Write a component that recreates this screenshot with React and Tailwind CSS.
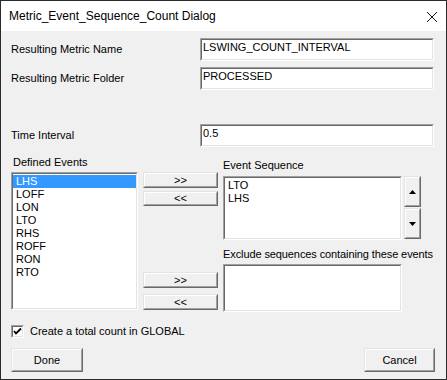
import React from "react";

const FONT = { fontFamily: '"Liberation Sans", Arial, sans-serif' };

function Sunken({ className = "", children }) {
  return (
    <div className={`border border-t-[#a0a0a0] border-l-[#a0a0a0] border-b-white border-r-white ${className}`}>
      <div className="h-full w-full border border-t-[#696969] border-l-[#696969] border-b-[#e3e3e3] border-r-[#e3e3e3] bg-white overflow-hidden">
        {children}
      </div>
    </div>
  );
}

function Raised({ className = "", children }) {
  return (
    <div className={`border border-t-[#e3e3e3] border-l-[#e3e3e3] border-b-[#696969] border-r-[#696969] ${className}`}>
      <div className="h-full w-full border border-t-white border-l-white border-b-[#a0a0a0] border-r-[#a0a0a0] bg-[#f0f0f0] flex items-center justify-center text-[11px] text-black leading-none">
        {children}
      </div>
    </div>
  );
}

function TextField({ value }) {
  return (
    <Sunken className="w-[234px] h-[23px]">
      <div className="pl-[1px] pt-[1px] text-[11px] leading-[13px] text-black">{value}</div>
    </Sunken>
  );
}

function Row({ label, value, className = "" }) {
  return (
    <div className={`flex items-center ${className}`}>
      <span className="w-[189px] text-[11px] leading-[13px] text-black">{label}</span>
      <TextField value={value} />
    </div>
  );
}

const events = ["LHS", "LOFF", "LON", "LTO", "RHS", "ROFF", "RON", "RTO"];

export default function App() {
  return (
    <div className="w-[447px] h-[380px] border border-[#2a2a2a] bg-[#f0f0f0] flex flex-col" style={FONT}>
      {/* title bar */}
      <div className="h-[30px] bg-white flex items-center justify-between pl-[8px] pr-[8px] shrink-0">
        <span className="text-[12px] text-black">
          Metric_Event_Sequence_Count Dialog
        </span>
        <svg width="12" height="12" viewBox="0 0 12 12" className="mt-[1px]">
          <path d="M1 1 L11 11 M11 1 L1 11" stroke="#111" strokeWidth="1" fill="none" />
        </svg>
      </div>

      <div className="pl-[10px] pr-[10px] flex flex-col">
        <Row label="Resulting Metric Name" value="LSWING_COUNT_INTERVAL" className="mt-[7px]" />
        <Row label="Resulting Metric Folder" value="PROCESSED" className="mt-[6px]" />
        <Row label="Time Interval" value="0.5" className="mt-[34px]" />

        {/* lists */}
        <div className="flex">
          <div className="flex flex-col w-[127px]">
            <span className="mt-[9px] text-[11px] leading-[13px] text-black pl-[2px]">Defined Events</span>
            <Sunken className="mt-[3px] h-[138px]">
              <div className="pt-[1px] text-[11px] leading-[13px] text-black">
                {events.map((e, i) => (
                  <div key={e} className={`pl-[3px] h-[13px] ${i === 0 ? "bg-[#3399ff] text-white" : ""}`}>{e}</div>
                ))}
              </div>
            </Sunken>
          </div>

          <div className="flex flex-col w-[75px] ml-[5px]">
            <Raised className="mt-[25px] h-[16px]">&gt;&gt;</Raised>
            <Raised className="mt-[3px] h-[15px]">&lt;&lt;</Raised>
            <Raised className="mt-[66px] h-[16px]">&gt;&gt;</Raised>
            <Raised className="mt-[6px] h-[16px]">&lt;&lt;</Raised>
          </div>

          <div className="flex flex-col ml-[5px] w-[213px]">
            <span className="mt-[12px] text-[11px] leading-[13px] text-black">Event Sequence</span>
            <div className="flex mt-[4px]">
              <Sunken className="w-[179px] h-[64px]">
                <div className="pl-[3px] pt-[1px] text-[11px] leading-[13px] text-black">
                  <div>LTO</div>
                  <div>LHS</div>
                </div>
              </Sunken>
              <div className="flex flex-col ml-[2px] w-[17px]">
                <Raised className="h-[31px]">
                  <svg width="7" height="4" viewBox="0 0 7 4"><path d="M3.5 0 L7 4 L0 4 Z" fill="#000" /></svg>
                </Raised>
                <Raised className="mt-[1px] h-[31px]">
                  <svg width="7" height="4" viewBox="0 0 7 4"><path d="M0 0 L7 0 L3.5 4 Z" fill="#000" /></svg>
                </Raised>
              </div>
            </div>
            <span className="mt-[8px] text-[11px] leading-[13px] text-black whitespace-nowrap tracking-[-0.1px]">Exclude sequences containing these events</span>
            <Sunken className="mt-[3px] w-[179px] h-[48px]" />
          </div>
        </div>

        {/* checkbox */}
        <div className="flex items-center mt-[13px]">
          <Sunken className="w-[13px] h-[13px]">
            <svg width="9" height="9" viewBox="0 0 9 9" className="block">
              <path d="M1 4 L3 6.5 L8 1.5" stroke="#000" strokeWidth="1.8" fill="none" />
            </svg>
          </Sunken>
          <span className="ml-[6px] text-[11px] leading-[13px] text-black">Create a total count in GLOBAL</span>
        </div>

        {/* buttons */}
        <div className="flex justify-between mt-[10px] pr-[1px]">
          <Raised className="w-[72px] h-[24px]">Done</Raised>
          <Raised className="w-[71px] h-[24px]">Cancel</Raised>
        </div>
      </div>
    </div>
  );
}
